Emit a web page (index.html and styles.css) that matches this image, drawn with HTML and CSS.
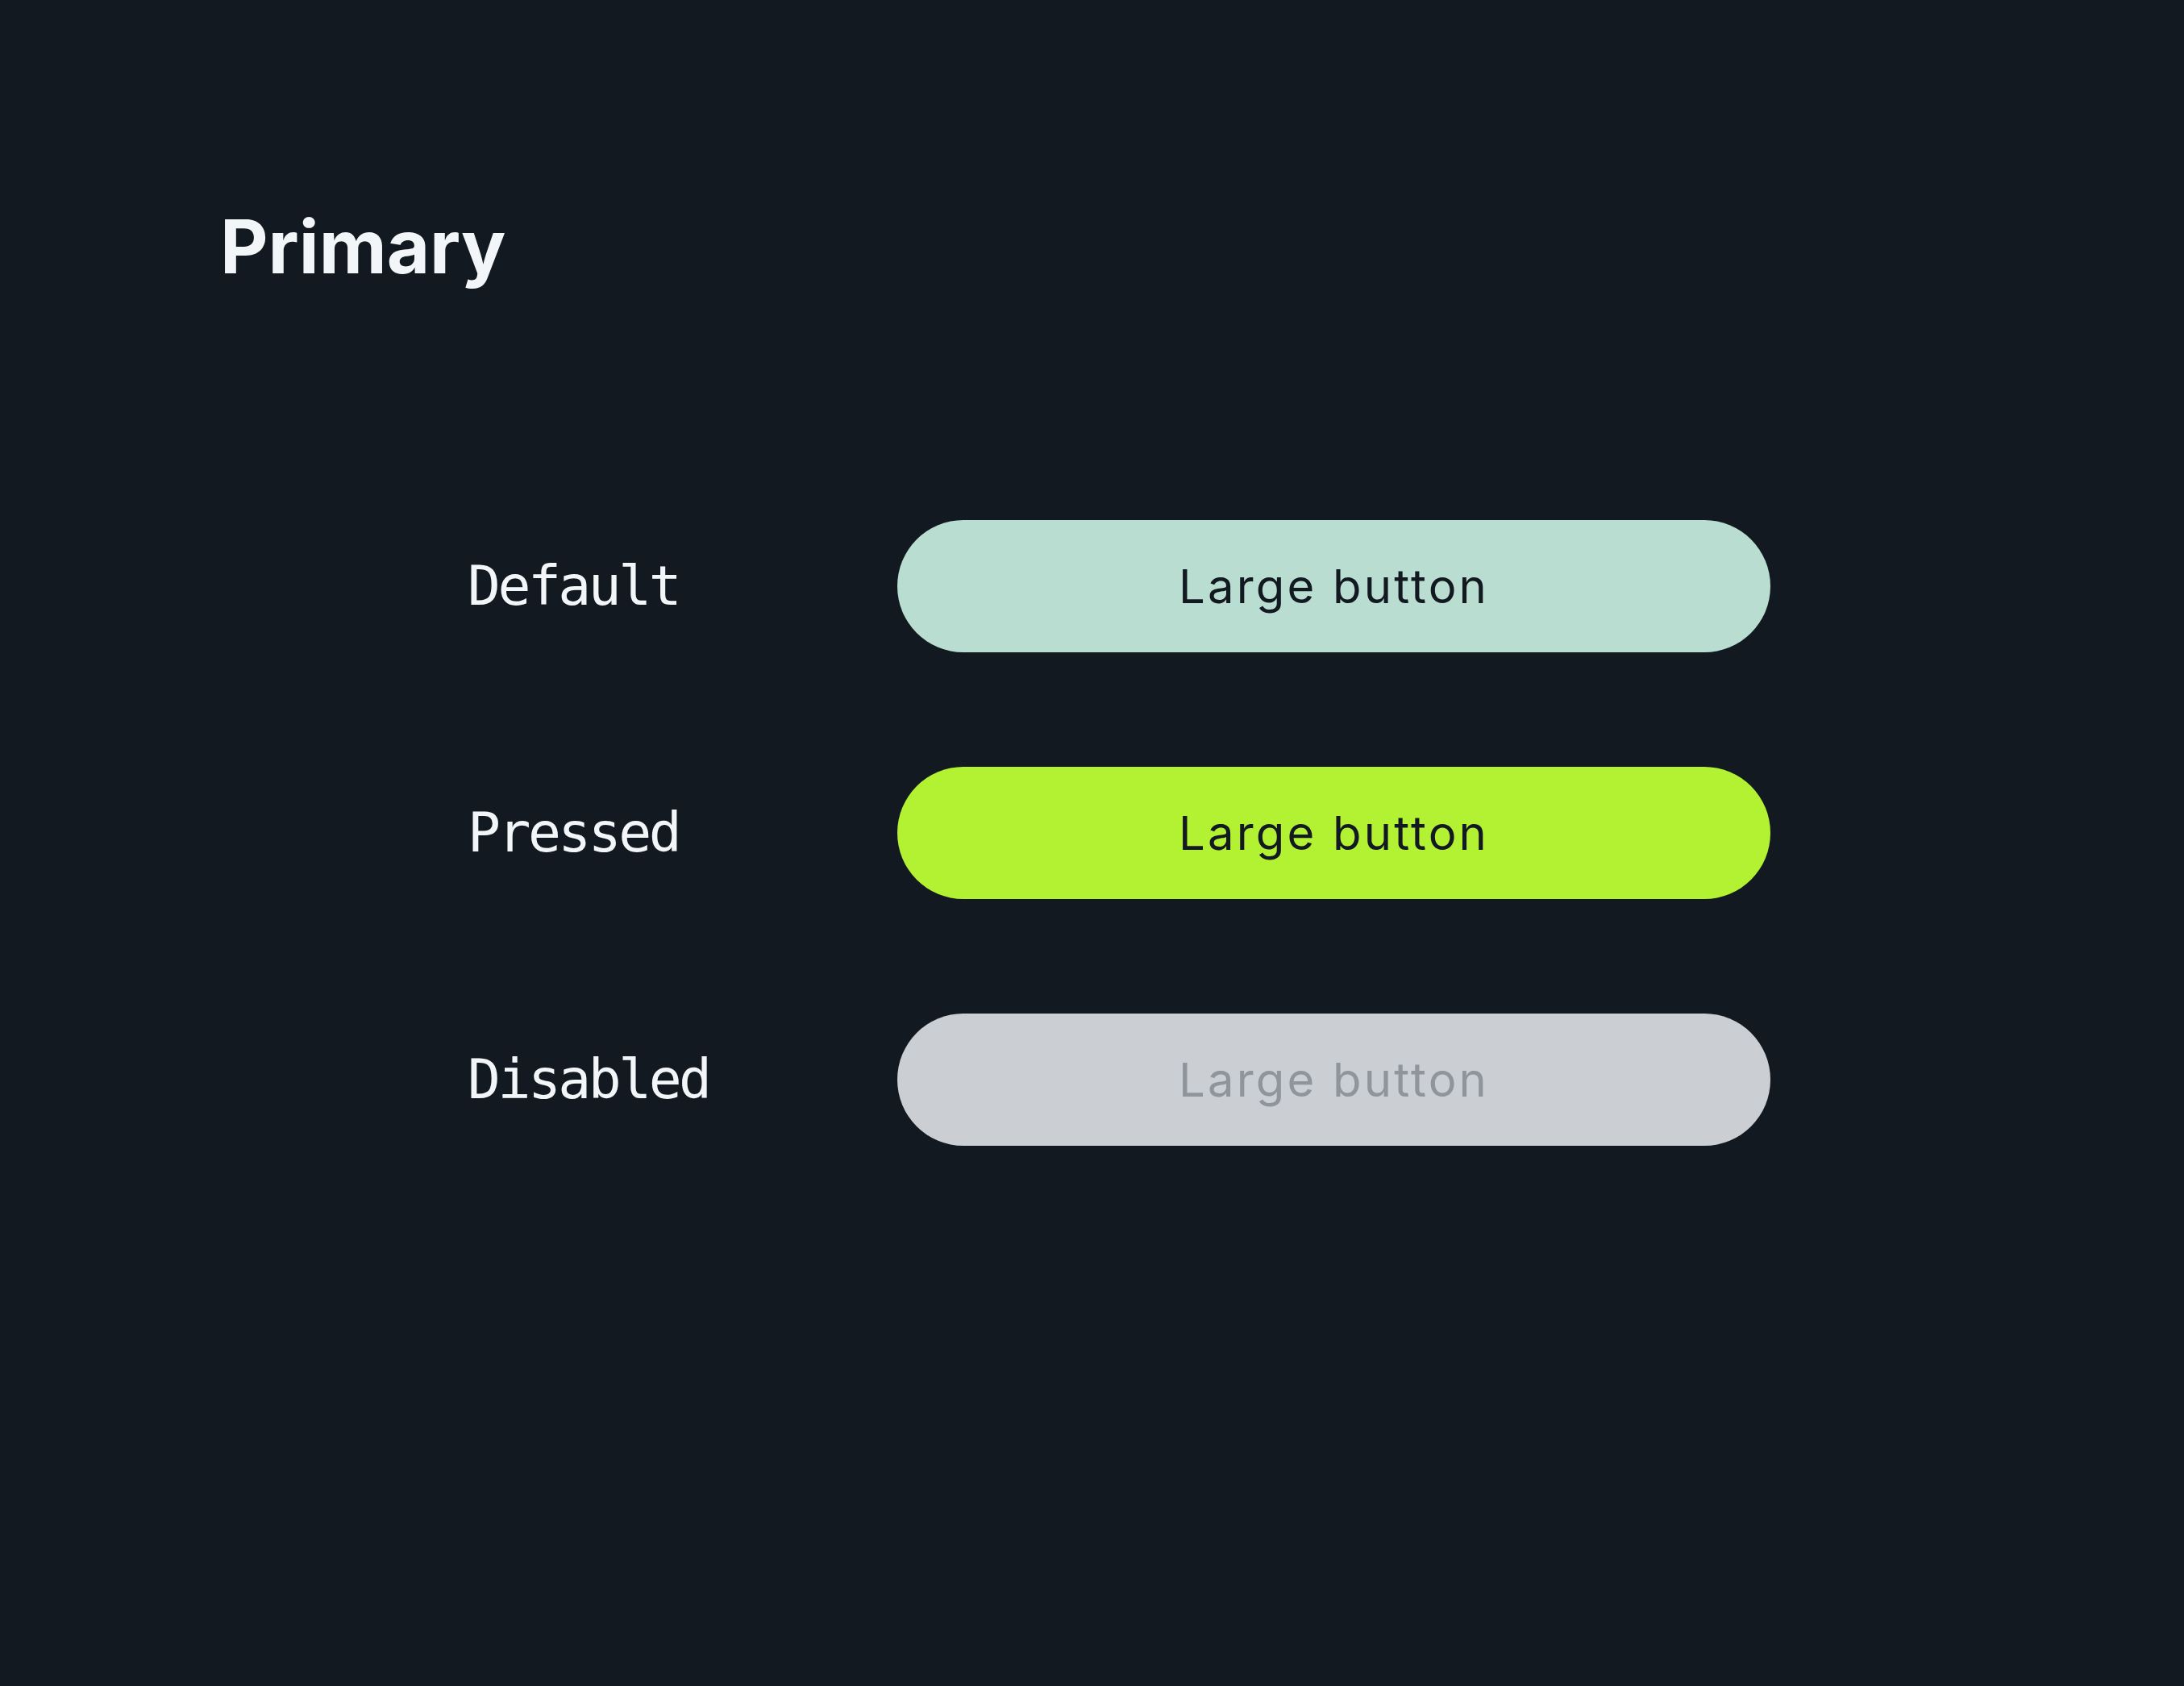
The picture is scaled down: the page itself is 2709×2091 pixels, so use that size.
FILE: index.html
```html
<!DOCTYPE html>
<html lang="en">
<head>
<meta charset="utf-8">
<title>Primary buttons</title>
<link rel="stylesheet" href="styles.css">
</head>
<body>
<main class="page">
  <h1 class="title">Primary</h1>
  <section class="states">
    <div class="label">Default</div>
    <button class="btn btn-default" type="button">Large button</button>
    <div class="label">Pressed</div>
    <button class="btn btn-pressed" type="button">Large button</button>
    <div class="label">Disabled</div>
    <button class="btn btn-disabled" type="button" disabled>Large button</button>
  </section>
</main>
</body>
</html>
```

FILE: styles.css
```css
html, body {
  margin: 0;
  padding: 0;
  background: #121920;
}

body {
  width: 2709px;
  height: 2091px;
  overflow: hidden;
}

.page {
  padding: 260px 0 0 273px;
}

.title {
  margin: 0;
  font-family: Inter, "Noto Sans", sans-serif;
  font-weight: 700;
  font-size: 92px;
  line-height: 1;
  color: #f3f6f8;
  letter-spacing: 0;
}

.states {
  margin: 293px 0 0 307px;
  display: grid;
  grid-template-columns: 533px 1083px;
  grid-auto-rows: 164px;
  row-gap: 142px;
  align-items: center;
}

.label {
  font-family: "DejaVu Sans Mono", "Liberation Mono", monospace;
  font-size: 68px;
  letter-spacing: -3.5px;
  color: #f3f6f8;
  line-height: 1;
}

.btn {
  height: 164px;
  width: 1083px;
  border: none;
  border-radius: 82px;
  padding: 0;
  margin: 0;
  font-family: Inter, "Noto Sans", sans-serif;
  font-size: 58px;
  font-weight: 400;
  letter-spacing: 3.2px;
  color: #121920;
  display: flex;
  align-items: center;
  justify-content: center;
}

.btn-default {
  background: #b9ddd0;
}

.btn-pressed {
  background: #b2f233;
}

.btn-disabled {
  background: #cbcfd3;
  color: #8f959b;
}
```
